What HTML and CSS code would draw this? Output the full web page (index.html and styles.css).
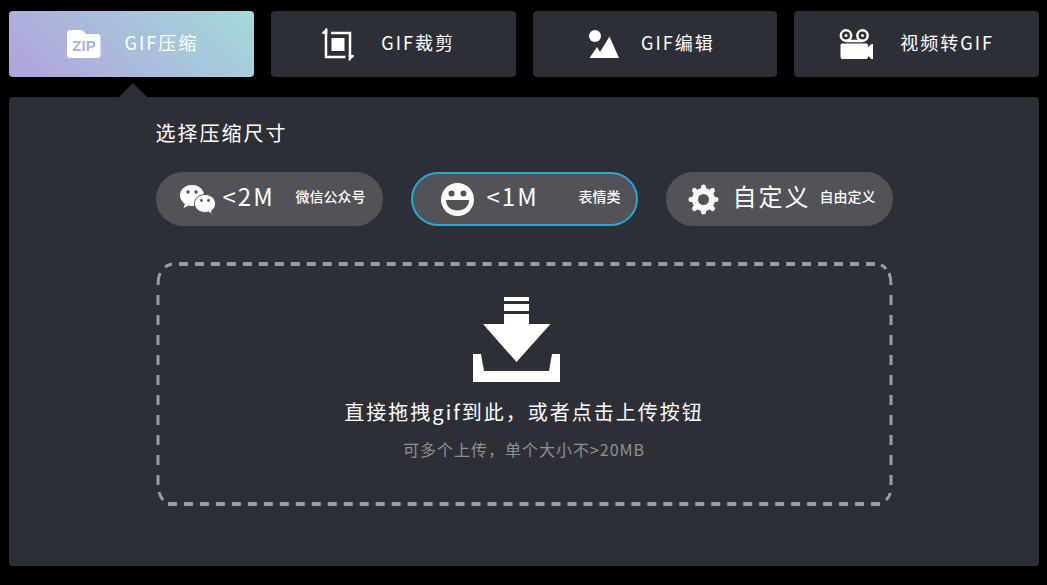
FILE: index.html
```html
<!DOCTYPE html>
<html lang="zh-CN">
<head>
    <meta charset="UTF-8">
    <meta name="viewport" content="width=device-width, initial-scale=1.0">
    <title>GIF压缩</title>
    <link rel="stylesheet" href="styles.css">
</head>
<body>
    <nav class="tabs">
        <button type="button" class="tab active">
            <svg width="62" height="40" viewBox="0 0 62 40" fill="#fff" aria-hidden="true">
                <path d="M19 6h11q2 0 3 1.500l2 2.500h11.500q3 0 3 3v18q0 3-3 3H19q-3 0-3-3V9q0-3 3-3z"/>
                <text x="33" y="27" class="zip-text">ZIP</text>
            </svg>
            <span>GIF压缩</span>
        </button>
        <button type="button" class="tab">
            <svg width="52" height="40" viewBox="0 0 52 40" fill="#fff" aria-hidden="true">
                <path d="M9 6v27h19.500M14 9h19v24" fill="none" stroke="#fff" stroke-width="2.500"/>
                <path d="M5 9q0-1 1-1.500Q8 6.500 8.500 4.500q1-1 1.800 0V10H6q-1 0-1-1zM37 32q0 1-1 1.500-2 .5-2.500 2.800-1 1-1.800 0V31H36q1 0 1 1zM14.500 14h13v13h-13z"/>
            </svg>
            <span>GIF裁剪</span>
        </button>
        <button type="button" class="tab">
            <svg width="48" height="40" viewBox="0 0 48 40" fill="#fff" aria-hidden="true">
                <circle cx="14" cy="12" r="6"/>
                <path d="M8.500 34l7.500-11 3 5 9.500-15.500L38 34z"/>
            </svg>
            <span>GIF编辑</span>
        </button>
        <button type="button" class="tab">
            <svg width="63" height="40" viewBox="0 0 63 40" fill="#fff" aria-hidden="true">
                <g fill="none" stroke="#fff" stroke-width="2.500">
                    <circle cx="21" cy="11.500" r="5.200"/>
                    <circle cx="37.500" cy="11.500" r="5.200"/>
                    <path d="M21 17h17"/>
                </g>
                <circle cx="21" cy="11.500" r="1.500"/>
                <circle cx="37.500" cy="11.500" r="1.500"/>
                <path d="M17 19.500h24q2 0 2 2v1.500l3.500-3H48v15h-1.500L43 32v1q0 2-2 2H17.500q-2 0-2-2V21q0-1.500 1.500-1.500z"/>
            </svg>
            <span>视频转GIF</span>
        </button>
    </nav>

    <main class="panel">
        <form class="content">
            <h2>选择压缩尺寸</h2>

            <div class="sizes">
                <label class="size">
                    <input type="radio" name="size" value="2m">
                    <svg width="40" height="34" viewBox="0 0 40 34" aria-hidden="true">
                        <path d="M14 3C7 3 2 7.500 2 13.500c0 3.500 2 6.500 5 8.500l-1.500 4 5-2.500q1.700.5 3.500.5c7 0 12-4.500 12-10.500S21 3 14 3z" fill="#fff"/>
                        <path d="M27 12.500c-6 0-10.500 4-10.500 9s4.500 9 10.500 9q2 0 3.500-.5l4 2.500-1-3.500c2.500-1.700 4-4.500 4-7.500 0-5-4.500-9-10.500-9z" fill="#fff" stroke="#515359"/>
                        <g fill="#515359">
                            <circle cx="10" cy="10" r="1.700"/>
                            <circle cx="18" cy="10" r="1.700"/>
                            <circle cx="23.500" cy="18.500" r="1.400"/>
                            <circle cx="30.500" cy="18.500" r="1.400"/>
                        </g>
                    </svg>
                    <strong>&lt;2M</strong>
                    <small>微信公众号</small>
                </label>
                <label class="size">
                    <input type="radio" name="size" value="1m" checked>
                    <svg width="49" height="34" viewBox="0 0 49 34" aria-hidden="true">
                        <circle cx="24.500" cy="17.500" r="16.500" fill="#fff"/>
                        <g fill="#515359">
                            <circle cx="18.500" cy="11.500" r="3"/>
                            <circle cx="30.500" cy="11.500" r="3"/>
                            <path d="M13 18h23c0 6.500-5 10.500-11.500 10.500S13 24.500 13 18z"/>
                        </g>
                    </svg>
                    <strong>&lt;1M</strong>
                    <small>表情类</small>
                </label>
                <label class="size">
                    <input type="radio" name="size" value="custom">
                    <svg width="40" height="34" viewBox="0 0 40 34" aria-hidden="true">
                        <g transform="translate(15.500 17.500)">
                            <g stroke="#fff" stroke-width="5" stroke-linecap="round">
                                <path d="M0-12.500v25M-12.500 0h25M-9-9L9 9M9-9L-9 9"/>
                            </g>
                            <circle r="11.500" fill="#fff"/>
                            <circle r="5.500" fill="#515359"/>
                        </g>
                    </svg>
                    <strong>自定义</strong>
                    <small>自由定义</small>
                </label>
            </div>

            <label class="drop-zone">
                <input type="file" accept="image/gif" multiple>
                <svg class="dashes" viewBox="0 0 738 244" preserveAspectRatio="none" aria-hidden="true">
                    <path d="M23 2h697M12 242h714" stroke-width="4" stroke-dasharray="9 7"/>
                    <path d="M2 33v190M736 33v190" stroke-width="3" stroke-dasharray="10 10"/>
                    <path d="M2 23q0-7 2-12M9 5q3-2 7-3M726 3q3 1 5 4M734 11q2 5 2 12M731 238q4-4 4-7M3 230q1 4 4 8" stroke-width="3"/>
                </svg>
                <svg width="102" height="86" viewBox="0 0 102 86" fill="#fff" aria-hidden="true">
                    <path d="M31 0h25v4H31zM31 7h25v7H31zM31 17h25v10h21.500L43.500 65 10 27h21z"/>
                    <path d="M0 57h8l3 17h65l3-17h8v28H0z"/>
                </svg>
                <span class="drop-title">直接拖拽gif到此，或者点击上传按钮</span>
                <span class="drop-hint">可多个上传，单个大小不&gt;20MB</span>
            </label>
        </form>
    </main>
</body>
</html>
```
FILE: styles.css
```css
* {
    box-sizing: border-box;
}

body {
    margin: 11px 8px 16px 9px;
    background-color: #000;
    color: #fff;
    font-family: "Noto Sans CJK SC", "Microsoft YaHei", sans-serif;
}

.tabs {
    display: grid;
    grid-template-columns: repeat(4, 1fr);
    gap: 17px;
    margin-bottom: 20px;
}

.tab {
    display: flex;
    align-items: center;
    justify-content: center;
    gap: 12px;
    height: 66px;
    padding: 0 14px 0 0;
    border: none;
    border-radius: 4px;
    background-color: #2d2f37;
    color: #fff;
    font-family: inherit;
    font-size: 18px;
    line-height: 24px;
    letter-spacing: 2px;
    white-space: nowrap;
    cursor: pointer;
}

.tab span {
    padding-bottom: 4px;
}

.tab.active {
    background-image: linear-gradient(45deg, #b1a2dc, #a2dadb);
}

.zip-text {
    fill: #a9b3dc;
    font-family: "Liberation Sans", Arial, sans-serif;
    font-size: 15px;
    font-weight: bold;
    letter-spacing: 0;
    text-anchor: middle;
}

.panel {
    position: relative;
    padding: 20px 24px 60px;
    border-radius: 4px;
    background-color: #2d2f37;
}

/* arrow under the active tab */
.panel::before {
    content: "";
    position: absolute;
    bottom: 100%;
    left: 110px;
    border: 14px solid transparent;
    border-top: none;
    border-bottom-color: #2d2f37;
}

.content {
    max-width: 737px;
    margin: 0 auto;
}

h2 {
    margin: 0 0 24px;
    font-size: 20px;
    font-weight: normal;
    line-height: 31px;
    letter-spacing: 2px;
}

.sizes {
    display: grid;
    grid-template-columns: repeat(3, 1fr);
    gap: 28px;
    margin-bottom: 36px;
}

.size {
    display: flex;
    align-items: center;
    height: 54px;
    padding: 0 15px 0 20px;
    border: 2px solid #515359;
    border-radius: 27px;
    background-color: #515359;
    white-space: nowrap;
    cursor: pointer;
}

.size:has(input:checked) {
    border-color: #21acd5;
}

.size input,
.drop-zone input {
    position: absolute;
    opacity: 0;
    width: 1px;
    height: 1px;
    margin: 0;
}

.size strong {
    margin-left: 5px;
    padding-bottom: 6px;
    font-size: 24px;
    font-weight: normal;
    line-height: 32px;
    letter-spacing: 2px;
}

.size small {
    margin-left: auto;
    padding-bottom: 6px;
    font-size: 14px;
    font-weight: 500;
    line-height: 20px;
}

.drop-zone {
    position: relative;
    display: flex;
    flex-direction: column;
    align-items: center;
    padding: 35px 20px 45px;
    cursor: pointer;
}

.dashes {
    position: absolute;
    top: 0;
    left: 0;
    width: 100%;
    height: 100%;
    fill: none;
    stroke: #9a9ca2;
}

.drop-title {
    margin-top: 14px;
    font-size: 20px;
    line-height: 30px;
    letter-spacing: 2px;
}

.drop-hint {
    margin-top: 10px;
    color: #8f9094;
    font-size: 16px;
    line-height: 24px;
    letter-spacing: 1px;
}
```
